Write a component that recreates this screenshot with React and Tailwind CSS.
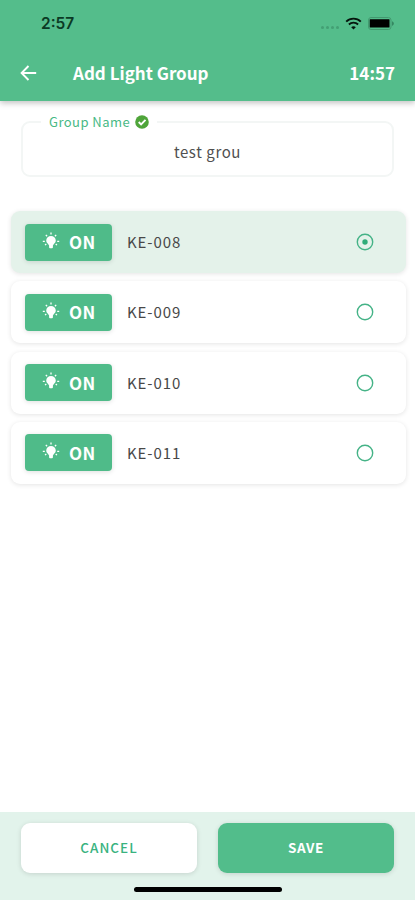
const LIGHTS = [
  { id: "KE-008", state: "ON", selected: true },
  { id: "KE-009", state: "ON", selected: false },
  { id: "KE-010", state: "ON", selected: false },
  { id: "KE-011", state: "ON", selected: false },
];

function WifiIcon() {
  return (
    <svg width="17" height="13" viewBox="0 0 17 13" fill="none" stroke="#06140d">
      <path d="M1.2 4.6C5.2.6 11.8.6 15.8 4.6" strokeWidth="1.9" />
      <path d="M3.9 7.5c2.5-2.5 6.7-2.5 9.2 0" strokeWidth="1.8" />
      <path d="M8.5 12.5 6.2 10.2c1.2-1.2 3.4-1.2 4.6 0z" fill="#06140d" stroke="none" />
    </svg>
  );
}

function BatteryIcon() {
  return (
    <svg width="27" height="13" viewBox="0 0 27 13" fill="none">
      <rect x="0.5" y="0.5" width="22.5" height="12" rx="2.5" stroke="#439a70" />
      <rect x="1.7" y="2.2" width="19.8" height="8.2" rx="0.5" fill="#000" />
      <path d="M24 4.2c2.5 1 2.5 3.6 0 4.6z" fill="#358862" />
    </svg>
  );
}

function BackIcon() {
  return (
    <svg width="17" height="16" viewBox="0 0 17 16" fill="none" stroke="#fff" strokeWidth="1.9">
      <path d="M8.5 1 1.6 8l6.9 7M1.8 8H16.2" />
    </svg>
  );
}

function BulbIcon() {
  return (
    <svg width="18" height="18" viewBox="0 0 18 18" fill="#fff">
      <path d="M9 4a4.8 4.8 0 0 1 4.8 4.7c0 2.2-2.400 3-2.900 4.900v1.700q0 .9-.9.9H8q-.9 0-.9-.9v-1.700C6.600 11.700 4.200 10.900 4.200 8.700A4.800 4.800 0 0 1 9 4z" />
      <path
        d="M9 .6v2M3.800 2.900l1.300 1.400M14.200 2.900l-1.300 1.400M.8 9.300h2M15.200 9.300h2M3 13l1.300-.9M15 13l-1.300-.9"
        stroke="#fff"
        strokeWidth="1.3"
      />
    </svg>
  );
}

function CheckBadge() {
  return (
    <svg width="14" height="14" viewBox="0 0 14 14" fill="none">
      <circle cx="7" cy="7" r="6.8" fill="#4fa53a" />
      <path d="m3.7 7 2.4 2.4 4.4-4.5" stroke="#fff" strokeWidth="1.9" />
    </svg>
  );
}

function Radio({ selected }) {
  return (
    <svg width="18" height="18" viewBox="0 0 18 18" fill="none">
      <circle cx="9" cy="9" r="7.7" stroke="#45b387" strokeWidth="1.4" />
      {selected && <circle cx="9" cy="9" r="2.7" fill="#2fac79" />}
    </svg>
  );
}

function LightRow({ light }) {
  return (
    <li
      className={`flex h-[62px] items-center rounded-[9px] pl-3.5 pr-8 shadow-[0_1px_5px_rgba(0,0,0,0.11)] ${
        light.selected ? "bg-[#e4f2ea]" : "bg-white"
      }`}
    >
      <button className="flex h-[37px] w-[87px] items-center rounded-[4px] bg-[#4fbb89] pl-[17px] shadow-[0_1px_5px_rgba(0,0,0,0.13)]">
        <span className="-mt-[3px]">
          <BulbIcon />
        </span>
        <span className="ml-[9px] text-[17px] leading-5 font-bold tracking-[0.3px] text-white">{light.state}</span>
      </button>
      <span className="ml-[15px] text-[15px] leading-5 tracking-[0.9px] text-[#484848]">{light.id}</span>
      <span className="ml-auto">
        <Radio selected={light.selected} />
      </span>
    </li>
  );
}

function App() {
  return (
    <div className="flex h-[900px] w-[415px] flex-col overflow-hidden bg-white font-['Noto_Sans_CJK_KR','Noto_Sans',sans-serif]">
      {/* Header */}
      <header className="h-[101px] shrink-0 bg-[#54bd8b] shadow-[0_2px_6px_rgba(0,0,0,0.25)]">
        <div className="flex h-[46px] items-center pl-[41px] pr-[20px]">
          <span className="mt-[2px] font-['Inter',sans-serif] text-[15.5px] font-semibold text-[#0b3a25]">2:57</span>
          <div className="ml-auto mt-2 flex gap-[2px]">
            {[0, 1, 2, 3].map((dot) => (
              <span key={dot} className="size-[3px] rounded-full bg-[#449f74]" />
            ))}
          </div>
          <span className="ml-[6px]">
            <WifiIcon />
          </span>
          <span className="ml-[6px]">
            <BatteryIcon />
          </span>
        </div>
        <div className="flex h-[54px] items-center px-[20px] text-white">
          <BackIcon />
          <h1 className="ml-[36px] text-[17px] leading-5 font-bold">Add Light Group</h1>
          <span className="ml-auto text-[17px] leading-5 font-bold">14:57</span>
        </div>
      </header>

      {/* Group name */}
      <fieldset className="mx-[21px] mt-[11px] h-[65px] rounded-[9px] border-2 border-[#f3f6f5] pl-[18px] pr-[18px]">
        <legend className="flex h-5 items-center gap-[5px] px-[8px] text-[13px] leading-5 tracking-[0.45px] text-[#48b985]">
          Group Name
          <CheckBadge />
        </legend>
        <div className="pt-[10px] text-center text-[15px] leading-5 tracking-[0.6px] text-[#505050]">test grou</div>
      </fieldset>

      {/* Lights */}
      <ul className="ml-[11px] mr-[9px] mt-[34px] flex flex-col gap-[8.3px]">
        {LIGHTS.map((light) => (
          <LightRow key={light.id} light={light} />
        ))}
      </ul>

      {/* Actions */}
      <footer className="mt-auto flex h-[88px] shrink-0 flex-col items-center bg-[#e2f3eb]">
        <div className="mt-[11px] grid w-full grid-cols-2 gap-[21px] px-[21px] text-[13.5px] leading-5">
          <button className="h-[50px] rounded-[9px] bg-white pb-[2px] font-medium tracking-[1px] text-[#39b37f] shadow-[0_1px_5px_rgba(0,0,0,0.13)]">
            CANCEL
          </button>
          <button className="h-[50px] rounded-[9px] bg-[#52bd8b] pb-[2px] font-bold tracking-[0.6px] text-white shadow-[0_1px_5px_rgba(0,0,0,0.13)]">
            SAVE
          </button>
        </div>
        <div className="mt-[14px] h-[5px] w-[148px] rounded-full bg-black" />
      </footer>
    </div>
  );
}

export default App;
